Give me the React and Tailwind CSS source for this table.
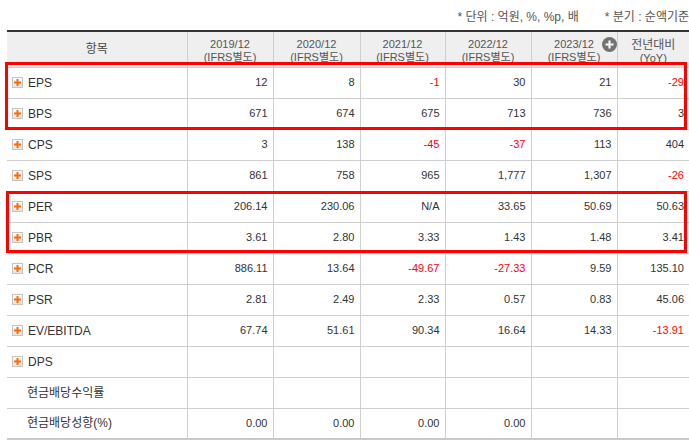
import React from 'react';

const rows = [
  { label: 'EPS', icon: true, vals: ['12', '8', '-1', '30', '21', '-29'] },
  { label: 'BPS', icon: true, vals: ['671', '674', '675', '713', '736', '3'] },
  { label: 'CPS', icon: true, vals: ['3', '138', '-45', '-37', '113', '404'] },
  { label: 'SPS', icon: true, vals: ['861', '758', '965', '1,777', '1,307', '-26'] },
  { label: 'PER', icon: true, vals: ['206.14', '230.06', 'N/A', '33.65', '50.69', '50.63'] },
  { label: 'PBR', icon: true, vals: ['3.61', '2.80', '3.33', '1.43', '1.48', '3.41'] },
  { label: 'PCR', icon: true, vals: ['886.11', '13.64', '-49.67', '-27.33', '9.59', '135.10'] },
  { label: 'PSR', icon: true, vals: ['2.81', '2.49', '2.33', '0.57', '0.83', '45.06'] },
  { label: 'EV/EBITDA', icon: true, vals: ['67.74', '51.61', '90.34', '16.64', '14.33', '-13.91'] },
  { label: 'DPS', icon: true, vals: ['', '', '', '', '', ''] },
  { label: '현금배당수익률', icon: false, vals: ['', '', '', '', '', ''] },
  { label: '현금배당성향(%)', icon: false, vals: ['0.00', '0.00', '0.00', '0.00', '', ''] },
];

const years = ['2019/12', '2020/12', '2021/12', '2022/12', '2023/12'];

const font = { fontFamily: "'Liberation Sans', 'Noto Sans CJK KR', sans-serif" };

function PlusBox() {
  return (
    <span className="inline-flex w-[11px] h-[11px] items-center justify-center border border-[#c4c4c4] bg-gradient-to-b from-white to-[#e6e6e6] mr-[5px] shrink-0">
      <svg width="7" height="7" viewBox="0 0 7 7">
        <rect x="2.5" y="0" width="2" height="7" fill="#ff6a00" />
        <rect x="0" y="2.5" width="7" height="2" fill="#ff6a00" />
      </svg>
    </span>
  );
}

function CirclePlus() {
  return (
    <svg width="15" height="15" viewBox="0 0 15 15" className="absolute left-full ml-[8px] -top-[1px]">
      <circle cx="7.5" cy="7.5" r="7.5" fill="#737373" />
      <rect x="6.5" y="3.5" width="2" height="8" fill="#fff" />
      <rect x="3.5" y="6.5" width="8" height="2" fill="#fff" />
    </svg>
  );
}

export default function App() {
  return (
    <div className="w-[689px] h-[444px] bg-white overflow-hidden text-[#333]" style={font}>
      <div className="h-[30px] flex items-start justify-end pt-[10px] text-[12px] leading-[14px] text-[#555] gap-[26px]">
        <span>* 단위 : 억원, %, %p, 배</span>
        <span>* 분기 : 순액기준</span>
      </div>

      <div className="relative ml-[7px] w-[682px]">
        <table className="w-[682px] table-fixed border-collapse border-t-2 border-t-[#333] border-b-2 border-b-[#c9c9c9]">
          <colgroup>
            <col className="w-[180px]" />
            <col className="w-[86px]" />
            <col className="w-[87px]" />
            <col className="w-[85px]" />
            <col className="w-[86px]" />
            <col className="w-[86px]" />
            <col className="w-[72px]" />
          </colgroup>
          <thead>
            <tr className="h-[36px] bg-[#efefef] border-b border-[#cfcfcf]">
              <th className="font-normal text-[12px] text-[#444] border-r border-[#cfcfcf] p-0">항목</th>
              {years.map((y, i) => (
                <th key={y} className="font-normal text-[11px] leading-[13px] text-[#555] border-r border-[#cfcfcf] p-0 pt-[4px]">
                  <div>
                    <span className="relative inline-block">
                      {y}
                      {i === 4 && <CirclePlus />}
                    </span>
                  </div>
                  <div>(IFRS별도)</div>
                </th>
              ))}
              <th className="font-normal text-[12px] leading-[14px] text-[#555] p-0 pt-[4px]">
                <div>전년대비</div>
                <div className="text-[11px] leading-[13px]">(YoY)</div>
              </th>
            </tr>
          </thead>
          <tbody>
            {rows.map((r) => (
              <tr key={r.label} className="h-[31px] border-b border-[#cfcfcf] last:border-b-0">
                <td className="border-r border-[#cfcfcf] p-0 pl-[5px] text-[12px] text-[#333]">
                  <div className={r.icon ? 'flex items-center' : 'pl-[15px]'}>
                    {r.icon && <PlusBox />}
                    <span>{r.label}</span>
                  </div>
                </td>
                {r.vals.map((v, i) => (
                  <td
                    key={i}
                    className={
                      'p-0 pr-[5px] text-right text-[11px] ' +
                      (i < 5 ? 'border-r border-[#cfcfcf] ' : '') +
                      (v.startsWith('-') ? 'text-[#ff0000]' : 'text-[#333]')
                    }
                  >
                    {v}
                  </td>
                ))}
              </tr>
            ))}
          </tbody>
        </table>

        <div className="absolute top-[32px] -left-[2px] w-[682px] h-[68px] border-[3px] border-[#ff0000]" />
        <div className="absolute top-[161px] -left-[1px] w-[681px] h-[62px] border-[3px] border-[#ff0000]" />
      </div>
    </div>
  );
}
